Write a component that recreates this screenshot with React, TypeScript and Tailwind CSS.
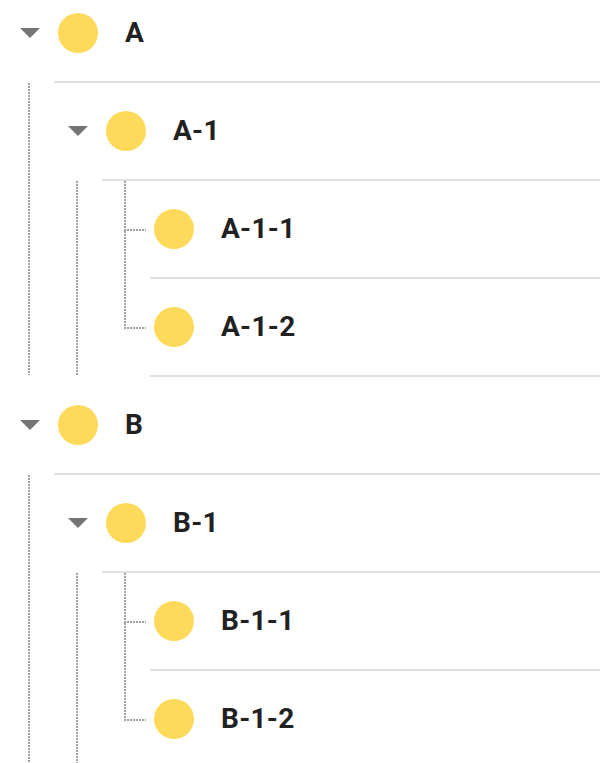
import React from "react";

type TreeNode = { label: string; children?: TreeNode[] };

const data: TreeNode[] = [
  {
    label: "A",
    children: [
      { label: "A-1", children: [{ label: "A-1-1" }, { label: "A-1-2" }] },
    ],
  },
  {
    label: "B",
    children: [
      { label: "B-1", children: [{ label: "B-1-1" }, { label: "B-1-2" }] },
    ],
  },
];

const vDots =
  "bg-[image:repeating-linear-gradient(to_bottom,#a0a0a0_0px,#a0a0a0_2px,transparent_2px,transparent_3px)]";
const hDots =
  "bg-[image:repeating-linear-gradient(to_right,#a0a0a0_0px,#a0a0a0_2px,transparent_2px,transparent_3px)]";

function Content({ label }: { label: string }) {
  return (
    <div className="flex-1 min-w-0 h-[98px] border-b-2 border-[#e0e0e0] flex items-center pl-[4px]">
      <div className="w-[40px] h-[40px] rounded-full bg-[#ffd95a] shrink-0" />
      <span className="ml-[27px] text-[28px] leading-none font-bold text-[#212121] tracking-[0.3px]">
        {label}
      </span>
    </div>
  );
}

function Toggle() {
  return (
    <div className="w-[54px] h-[96px] shrink-0 flex items-center pl-[20px]">
      <svg width="20" height="10" viewBox="0 0 20 10">
        <polygon points="0,0 20,0 10,10" fill="#757575" />
      </svg>
    </div>
  );
}

function Leaf({ label, last }: { label: string; last: boolean }) {
  return (
    <div className="flex">
      <div className="w-[54px] shrink-0 pl-[28px] flex flex-col">
        <div className={`w-[2px] h-[48px] ${vDots}`} />
        <div className={`w-[22px] h-[2px] ${hDots}`} />
        {last ? <div className="flex-1" /> : <div className={`w-[2px] flex-1 ${vDots}`} />}
      </div>
      <Content label={label} />
    </div>
  );
}

function Branch({ node }: { node: TreeNode }) {
  const kids = node.children ?? [];
  const hasBranches = kids.some((k) => k.children && k.children.length);
  return (
    <div>
      <div className="flex">
        <Toggle />
        <Content label={node.label} />
      </div>
      <div className="flex">
        <div className="w-[48px] shrink-0 pl-[28px] flex flex-col pb-[2px]">
          <div className={`w-[2px] flex-1 ${vDots}`} />
        </div>
        <div className="flex-1 min-w-0">
          {kids.map((k, i) =>
            k.children && k.children.length ? (
              <Branch key={k.label} node={k} />
            ) : (
              <Leaf key={k.label} label={k.label} last={i === kids.length - 1} />
            )
          )}
        </div>
      </div>
    </div>
  );
}

export default function App() {
  return (
    <div className="w-[600px] h-[763px] overflow-hidden bg-white font-['Roboto',sans-serif]">
      <div className="-mt-[15px]">
        {data.map((n) => (
          <Branch key={n.label} node={n} />
        ))}
      </div>
    </div>
  );
}
